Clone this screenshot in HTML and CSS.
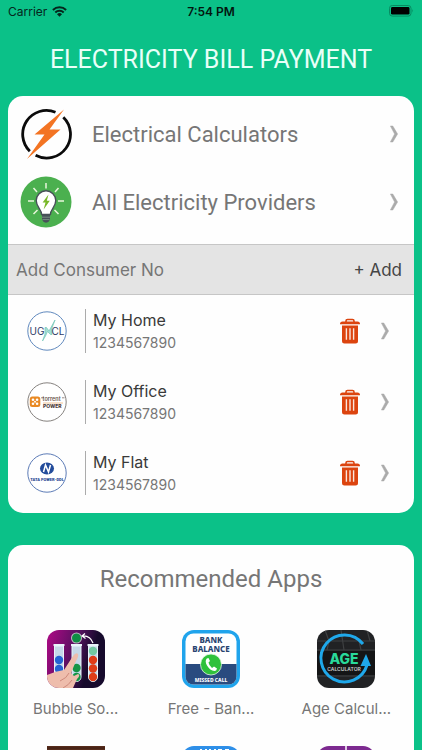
FILE: index.html
```html
<!DOCTYPE html>
<html lang="en">
<head>
    <meta charset="UTF-8">
    <meta name="viewport" content="width=device-width, initial-scale=1.0">
    <title>Electricity Bill Payment</title>
    <link rel="stylesheet" href="styles.css">
</head>
<body>
    <!-- shared icons -->
    <svg class="sprite" aria-hidden="true">
        <symbol id="chevron" viewBox="0 0 8 18">
            <path d="M0.4 1H2.8L7.6 9L2.8 17H0.4L4.6 9Z" fill="#ababab" stroke="#ababab" stroke-width="0.5"/>
        </symbol>
        <symbol id="trash" viewBox="0 0 20 26">
            <path d="M6 4V3Q6 1.5 7.5 1.5H12.5Q14 1.5 14 3V4" fill="none" stroke="#dc440f" stroke-width="1.6"/>
            <path d="M0 5.4Q0.2 3.4 2.5 3.4H17.5Q19.8 3.4 20 5.4V6.2H0Z" fill="#dc440f"/>
            <path d="M2 7.4H18V23Q18 25.5 15.5 25.5H4.5Q2 25.5 2 23Z" fill="#dc440f"/>
            <path d="M6.4 10.2V21.8M10 10.2V21.8M13.6 10.2V21.8" stroke="#fbe6dc" stroke-width="1.4"/>
        </symbol>
    </svg>

    <div class="screen">
        <div class="status-bar">
            <div class="carrier">
                <span>Carrier</span>
                <svg width="15" height="11" viewBox="0 0 15 11">
                    <path d="M0.9 4A9.6 9.6 0 0 1 14.1 4M3.3 6.4A6.1 6.1 0 0 1 11.7 6.4" fill="none" stroke="#05261c" stroke-width="2"/>
                    <path d="M7.5 10.8L5 8.2A3.7 3.7 0 0 1 10 8.2Z" fill="#05261c"/>
                </svg>
            </div>
            <span class="time">7:54 PM</span>
            <svg class="battery" width="25" height="12" viewBox="0 0 25 12">
                <rect x="0.5" y="0.5" width="21.5" height="10.6" rx="2.8" fill="none" stroke="#078a61"/>
                <rect x="2" y="2" width="18.5" height="7.6" rx="1.4" fill="#000"/>
                <path d="M23.3 4Q24.8 5.8 23.3 7.6Z" fill="#078a61"/>
            </svg>
        </div>

        <h1>ELECTRICITY BILL PAYMENT</h1>

        <div class="card">
            <a class="menu-row" href="#">
                <svg width="52" height="52" viewBox="0 0 52 52">
                    <path d="M35.5 4.2A23.8 23.8 0 0 0 9.8 43.2M15.6 47.3A23.8 23.8 0 0 0 43.3 9.2" fill="none" stroke="#0b0b0b" stroke-width="2.8"/>
                    <path d="M44 1.5L14.5 26.5H24.5L7 51L40.5 21.5H29.5Z" fill="#f37423"/>
                </svg>
                <span class="menu-label">Electrical Calculators</span>
                <svg class="chevron"><use href="#chevron"/></svg>
            </a>
            <a class="menu-row" href="#">
                <svg width="52" height="52" viewBox="0 0 52 52">
                    <circle cx="26" cy="26" r="25.5" fill="#4bb04f"/>
                    <path d="M26 7V12.5M13.5 12L17 16M38.5 12L35 16M8 25H14M38 25H44M13.5 38L17.5 34M38.5 38L34.5 34" stroke="#e9f6dc" stroke-width="1.5"/>
                    <path d="M21.6 38.5C21.6 33.5 16.2 31 16.2 24.6A9.8 9.8 0 0 1 35.8 24.6C35.8 31 30.4 33.5 30.4 38.5Z" fill="#fff" stroke="#475058" stroke-width="1.4"/>
                    <path d="M22 39H30V43.5Q29 46.5 26 46.8Q23 46.5 22 43.5Z" fill="#475058"/>
                    <path d="M22 41.2H30M22.4 43.6H29.6" stroke="#8ba693" stroke-width="0.7"/>
                    <path d="M28.5 18.5L22.6 26.5H25.5L23.6 33.5L29.8 24.8H26.8Z" fill="#79b829"/>
                </svg>
                <span class="menu-label">All Electricity Providers</span>
                <svg class="chevron"><use href="#chevron"/></svg>
            </a>

            <div class="consumer-header">
                <h2>Add Consumer No</h2>
                <button class="add-btn" type="button">+ Add</button>
            </div>

            <ul class="consumers">
                <li class="consumer">
                    <svg class="provider" viewBox="0 0 40 40">
                        <circle cx="20" cy="20" r="19.2" fill="#fff" stroke="#4d7bb5" stroke-width="0.9"/>
                        <path d="M15.500 30L18 23V16.500H19.500L22 20L28 9L25 17V23.500H23.500L20.500 20.500L18.500 25Z" fill="#a5ddd3" stroke="#72c5b8" stroke-width="0.7"/>
                        <text x="2.5" y="23.5" font-size="10" fill="#2d3a66">UG</text>
                        <text x="24.5" y="23.5" font-size="10" fill="#2d3a66">CL</text>
                    </svg>
                    <a class="consumer-info" href="#">
                        <span class="name">My Home</span>
                        <span class="number">1234567890</span>
                    </a>
                    <button class="delete" type="button" aria-label="Delete My Home"><svg><use href="#trash"/></svg></button>
                    <svg class="chevron"><use href="#chevron"/></svg>
                </li>
                <li class="consumer">
                    <svg class="provider" viewBox="0 0 40 40">
                        <circle cx="20" cy="20" r="19.2" fill="#fff" stroke="#77736f" stroke-width="0.9"/>
                        <rect x="2.8" y="14.5" width="10.5" height="10.5" rx="2.5" fill="#e98a24"/>
                        <g fill="#fff">
                            <circle cx="6" cy="17.7" r="1.3"/>
                            <circle cx="10.1" cy="17.7" r="1.3"/>
                            <circle cx="6" cy="21.8" r="1.3"/>
                            <circle cx="10.1" cy="21.8" r="1.3"/>
                            <circle cx="8" cy="19.7" r="1"/>
                        </g>
                        <text x="15.5" y="19.2" font-size="5.5" font-weight="600" fill="#6b5850">torrent</text>
                        <path d="M14 15.8H17M35 15.8H37.5" stroke="#6b5850" stroke-width="0.7"/>
                        <path d="M16 21H36" stroke="#eeb27a" stroke-width="0.8"/>
                        <text x="16" y="26" font-size="5" font-weight="800" fill="#4f403c">POWER</text>
                    </svg>
                    <a class="consumer-info" href="#">
                        <span class="name">My Office</span>
                        <span class="number">1234567890</span>
                    </a>
                    <button class="delete" type="button" aria-label="Delete My Office"><svg><use href="#trash"/></svg></button>
                    <svg class="chevron"><use href="#chevron"/></svg>
                </li>
                <li class="consumer">
                    <svg class="provider" viewBox="0 0 40 40">
                        <circle cx="20" cy="20" r="19.2" fill="#fff" stroke="#4a6cae" stroke-width="0.9"/>
                        <ellipse cx="20" cy="15.5" rx="7" ry="6" fill="#234c9b"/>
                        <path d="M16.5 19L18.5 12L21.5 19L23.5 12" fill="none" stroke="#fff" stroke-width="1.5"/>
                        <text class="tata" x="20" y="28" text-anchor="middle">TATA POWER-DDL</text>
                    </svg>
                    <a class="consumer-info" href="#">
                        <span class="name">My Flat</span>
                        <span class="number">1234567890</span>
                    </a>
                    <button class="delete" type="button" aria-label="Delete My Flat"><svg><use href="#trash"/></svg></button>
                    <svg class="chevron"><use href="#chevron"/></svg>
                </li>
            </ul>
        </div>

        <div class="card apps-card">
            <h2 class="apps-title">Recommended Apps</h2>
            <div class="apps">
                <a class="app" href="#">
                    <svg class="app-icon" viewBox="0 0 58 58">
                        <defs>
                            <linearGradient id="space" x1="0" y1="0.3" x2="1" y2="0.6">
                                <stop offset="0" stop-color="#a20a80"/>
                                <stop offset="0.45" stop-color="#55115f"/>
                                <stop offset="0.75" stop-color="#160a2c"/>
                            </linearGradient>
                        </defs>
                        <rect width="58" height="58" fill="url(#space)"/>
                        <g fill="#c5d8e8" stroke="#e9f5fb" stroke-width="1">
                            <path d="M7.5 16H16.5V47A4.5 4.5 0 0 1 7.5 47Z"/>
                            <path d="M25 16H34V47A4.5 4.5 0 0 1 25 47Z"/>
                            <path d="M41.5 16H50.5V47A4.5 4.5 0 0 1 41.5 47Z"/>
                            <path d="M6.5 15H17.5M24 15H35M40.5 15H51.5" stroke-width="1.8"/>
                        </g>
                        <circle cx="12" cy="30" r="4.2" fill="#2464d3"/>
                        <circle cx="12" cy="39" r="4.2" fill="#2464d3"/>
                        <circle cx="29.5" cy="38" r="4.2" fill="#159546"/>
                        <circle cx="29.5" cy="47" r="4.2" fill="#159546"/>
                        <circle cx="46" cy="21" r="4.2" fill="#73c9a2"/>
                        <circle cx="46" cy="30" r="4.2" fill="#df3d18"/>
                        <circle cx="46" cy="38.5" r="4.2" fill="#df3d18"/>
                        <circle cx="46" cy="47" r="4.2" fill="#df3d18"/>
                        <circle cx="29.5" cy="8" r="5.5" fill="#eafcf0" opacity="0.7"/>
                        <circle cx="29.5" cy="8" r="4.5" fill="#0e8c43"/>
                        <path d="M46 13Q43 5 35 6M38 3.5L35 6L38.5 8.5" fill="none" stroke="#fff" stroke-width="1.2"/>
                        <path d="M0 45Q9 41 17 40L26 26Q29 22 31 24Q32 26 29 31L24 43L27 46L31 44Q34 45 30 49L26 58H0Z" fill="#eebdac"/>
                        <path d="M22 43Q20 48 13 51M25 50Q22 55 16 58" fill="none" stroke="#c98576" stroke-width="0.9"/>
                    </svg>
                    <span class="app-name">Bubble So...</span>
                </a>
                <a class="app" href="#">
                    <svg class="app-icon" viewBox="0 0 58 58">
                        <rect width="58" height="58" fill="#20a4ec"/>
                        <rect x="3.5" y="3.5" width="51" height="51" rx="8" fill="#fff"/>
                        <path d="M3.5 34H54.5V46.5A8 8 0 0 1 46.5 54.5H11.5A8 8 0 0 1 3.5 46.5Z" fill="#294b7f"/>
                        <g class="bank-text" text-anchor="middle">
                            <text x="29" y="12.5" font-size="8" fill="#294470">BANK</text>
                            <text x="29" y="22" font-size="8" fill="#294470">BALANCE</text>
                            <text x="29" y="52" font-size="5" fill="#fff">MISSED CALL</text>
                        </g>
                        <circle cx="29" cy="34.5" r="10.5" fill="#2fc13b" stroke="#e4f9e5" stroke-width="0.8"/>
                        <path d="M24.8 28.5Q22.5 31 25 35.5Q28 40.5 32.5 41Q34.5 41 35 38.5L32 36.5L30 38Q27 35.5 26.5 32.5L28 31L26.5 28Z" fill="#fff"/>
                    </svg>
                    <span class="app-name">Free - Ban...</span>
                </a>
                <a class="app" href="#">
                    <svg class="app-icon" viewBox="0 0 58 58">
                        <rect width="58" height="58" fill="#212224"/>
                        <path d="M0 11H58M0 20H58M0 46H58M8 0L12 11L10 20M24 0L27 20M42 11L44 20M50 0L53 11" fill="none" stroke="#3e4042" stroke-width="1.2"/>
                        <rect y="21" width="58" height="24" fill="#141516"/>
                        <path d="M46 14A23.5 23.5 0 1 0 50 35" fill="none" stroke="#1fa8ea" stroke-width="3"/>
                        <path d="M49 24L54 36H43.5Z" fill="#1fa8ea"/>
                        <text x="27" y="34" text-anchor="middle" font-size="14" font-weight="800" fill="#29d99a">AGE</text>
                        <text x="27" y="40.5" text-anchor="middle" font-size="5" font-weight="600" fill="#c9cccd">CALCULATOR</text>
                    </svg>
                    <span class="app-name">Age Calcul...</span>
                </a>
                <a class="app" href="#" aria-label="Carrom">
                    <svg class="app-icon square" viewBox="0 0 58 58">
                        <rect width="58" height="58" fill="#562c1c"/>
                        <path d="M0 2H58M0 7H58M0 12H58M0 18H58" stroke="#3c1c12"/>
                    </svg>
                </a>
                <a class="app" href="#" aria-label="Loan">
                    <svg class="app-icon" viewBox="0 0 58 58">
                        <rect width="58" height="58" fill="#2e8fe8"/>
                        <path d="M19 3V12M24 3V12M28 3V12M33 3V12M36 4H40M43 4H47" stroke="#fff" stroke-width="2"/>
                    </svg>
                </a>
                <a class="app" href="#" aria-label="Flames">
                    <svg class="app-icon" viewBox="0 0 58 58">
                        <rect width="58" height="58" fill="#7d2a90"/>
                        <path d="M29 0V58" stroke="#fff" stroke-width="1.5"/>
                    </svg>
                </a>
            </div>
        </div>
    </div>
</body>
</html>
```

FILE: styles.css
```css
* {
    margin: 0;
    padding: 0;
    box-sizing: border-box;
}

body {
    font-family: Inter, Roboto, "Liberation Sans", sans-serif;
    background: #0bc188;
    color: #767676;
}

a {
    color: inherit;
    text-decoration: none;
}

button {
    border: none;
    background: none;
    font-family: inherit;
    cursor: pointer;
}

.sprite {
    position: absolute;
    width: 0;
    height: 0;
}

.screen {
    height: 100vh;
    padding: 0 8px;
    overflow: hidden;
}

/* Status bar */
.status-bar {
    display: grid;
    grid-template-columns: 1fr auto 1fr;
    align-items: center;
    height: 22px;
    font-size: 12px;
    color: #05261c;
}

.carrier {
    display: flex;
    align-items: center;
    gap: 5px;
}

.time {
    font-weight: 600;
    color: #03150f;
}

.battery {
    justify-self: end;
}

h1,
.menu-label,
.apps-title {
    font-family: Roboto, "Liberation Sans", sans-serif;
    font-weight: 400;
}

h1 {
    padding: 21px 0 19px;
    line-height: 34px;
    font-size: 25px;
    text-align: center;
    color: #e9fff8;
}

.card {
    background: #fefefe;
    border-radius: 15px;
    overflow: hidden;
}

.menu-row {
    display: flex;
    align-items: center;
    height: 68px;
    padding: 0 16px 0 12px;
}

.menu-row:first-child {
    margin-top: 4px;
}

.menu-label {
    flex: 1;
    margin-left: 20px;
    font-size: 22px;
}

.chevron {
    width: 8px;
    height: 18px;
}

.consumer-header {
    display: flex;
    justify-content: space-between;
    align-items: center;
    height: 51px;
    margin-top: 8px;
    padding: 0 12px 0 8px;
    background: #e4e4e4;
    border-top: 1px solid #c6c6c6;
    border-bottom: 1px solid #c6c6c6;
}

.consumer-header h2 {
    font-size: 17px;
    font-weight: 400;
}

.add-btn {
    font-size: 17px;
    color: #454545;
}

/* Saved consumers */
.consumers {
    list-style: none;
    padding-bottom: 5px;
}

.consumer {
    display: flex;
    align-items: center;
    height: 71px;
    padding: 0 25px 0 19px;
}

.provider {
    width: 40px;
    height: 40px;
}

.tata {
    font-family: Roboto, sans-serif;
    font-size: 4px;
    font-weight: 900;
    fill: #1e4592;
}

.consumer-info {
    flex: 1;
    display: flex;
    flex-direction: column;
    gap: 2px;
    margin-left: 18px;
    padding-left: 7px;
    border-left: 1px solid #ababab;
}

.name {
    line-height: 22px;
    font-size: 16px;
    color: #3a3a3a;
}

.number {
    line-height: 20px;
    font-size: 14px;
}

.delete {
    margin-right: 21px;
}

.delete svg {
    display: block;
    width: 20px;
    height: 26px;
}

/* Recommended apps */
.apps-card {
    margin-top: 32px;
    padding-top: 19px;
}

.apps-title {
    line-height: 30px;
    font-size: 24px;
    text-align: center;
}

.apps {
    display: grid;
    grid-template-columns: repeat(3, 1fr);
    row-gap: 26px;
    margin-top: 36px;
    padding-bottom: 30px;
}

.app {
    display: flex;
    flex-direction: column;
    align-items: center;
}

.app-icon {
    width: 58px;
    height: 58px;
    border-radius: 12px;
}

.app-icon.square {
    border-radius: 0;
}

.bank-text {
    font-family: "Noto Sans", sans-serif;
    font-weight: 800;
}

.app-name {
    margin-top: 10px;
    line-height: 22px;
    font-size: 15px;
    white-space: nowrap;
}
```
